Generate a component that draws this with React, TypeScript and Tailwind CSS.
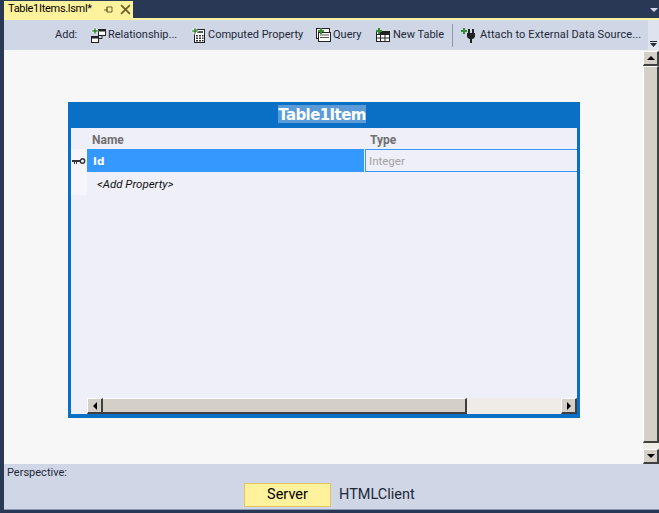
function Plus() {
  return <path d="M2 3h2V1h2v2h2v2H6v2H4V5H2z" fill="#388a34" stroke="#fff" strokeWidth="0.5" />;
}

function RelationshipIcon() {
  return (
    <svg width="16" height="16" viewBox="0 0 16 16" className="shrink-0">
      <rect x="8.5" y="2.5" width="7" height="6" fill="#fff" stroke="#222" />
      <rect x="8" y="2" width="8" height="2.5" fill="#222" />
      <rect x="1.5" y="9.5" width="7" height="6" fill="#fff" stroke="#222" />
      <rect x="1" y="9" width="8" height="2.5" fill="#222" />
      <path d="M12 8.5v3H9" fill="none" stroke="#222" />
      <Plus />
    </svg>
  );
}

function ComputedIcon() {
  return (
    <svg width="16" height="16" viewBox="0 0 16 16" className="shrink-0">
      <rect x="4.5" y="2.5" width="10" height="13" fill="#fff" stroke="#222" />
      <rect x="7" y="4" width="6" height="2" fill="#555" />
      <path d="M6 8h2v1.5H6zM9 8h2v1.5H9zM12 8h1.5v1.5H12zM6 10.5h2V12H6zM9 10.5h2V12H9zM12 10.5h1.5V12H12zM6 13h2v1.5H6zM9 13h2v1.5H9zM12 13h1.5v1.5H12z" fill="#333" />
      <Plus />
    </svg>
  );
}

function QueryIcon() {
  return (
    <svg width="16" height="16" viewBox="0 0 16 16" className="shrink-0">
      <rect x="1.5" y="1.5" width="13" height="10" fill="#fff" stroke="#222" />
      <rect x="3.5" y="5.5" width="12" height="9" fill="#fff" stroke="#222" />
      <path d="M5 8h9M5 10.5h9" stroke="#555" />
      <path d="M3 3h2V1h2v2h2v2H7v2H5V5H3z" fill="#388a34" />
    </svg>
  );
}

function TableIcon() {
  return (
    <svg width="16" height="16" viewBox="0 0 16 16" className="shrink-0">
      <rect x="1.5" y="4.5" width="13" height="10" fill="#fff" stroke="#222" />
      <rect x="6" y="4" width="9" height="3" fill="#222" />
      <path d="M1.5 7.5h13M1.5 11h13M5.5 4.5v10M10 4.5v10" stroke="#222" />
      <path d="M1 3h2V1h2v2h2v2H5v2H3V5H1z" fill="#388a34" />
    </svg>
  );
}

function PlugIcon() {
  return (
    <svg width="16" height="16" viewBox="0 0 16 16" className="shrink-0">
      <rect x="7" y="2" width="2" height="4" fill="#222" />
      <rect x="11" y="2" width="2" height="4" fill="#222" />
      <path d="M6 6h8v4l-2 2h-1v4H9v-4H8l-2-2z" fill="#222" />
      <path d="M0 3h2V1h2v2h2v2H4v2H2V5H0z" fill="#388a34" />
    </svg>
  );
}

function ToolItem({ icon, label, className }: { icon: React.ReactNode; label: string; className: string }) {
  return (
    <div className={"flex items-center gap-[2px] shrink-0 " + className}>
      {icon}
      <span className="whitespace-nowrap">{label}</span>
    </div>
  );
}

function Arrow({ dir }: { dir: "up" | "down" | "left" | "right" }) {
  const pts = { up: "0,5 8,5 4,1", down: "0,1 8,1 4,5", left: "5,0 5,8 1,4", right: "1,0 1,8 5,4" }[dir];
  const size = dir === "up" || dir === "down" ? "w-2 h-[6px]" : "w-[6px] h-2";
  const box = dir === "up" || dir === "down" ? "0 0 8 6" : "0 0 6 8";
  return (
    <svg viewBox={box} className={size}>
      <polygon points={pts} fill="#000" />
    </svg>
  );
}

function ScrollButton({ dir, className }: { dir: "up" | "down" | "left" | "right"; className: string }) {
  return (
    <div className={"shrink-0 flex items-center justify-center bg-[#d4d0c8] border-t border-l border-t-white border-l-white border-b-2 border-r-2 border-b-[#404040] border-r-[#404040] " + className}>
      <Arrow dir={dir} />
    </div>
  );
}

export default function App() {
  return (
    <div className="w-[659px] h-[513px] bg-[#293955] overflow-hidden flex flex-col text-[#1e2838] font-['Roboto',sans-serif] text-[11px]">
      {/* tab strip */}
      <div className="h-[17px] mt-px pl-1 flex shrink-0 relative">
        <div className="w-[129px] bg-[#fff29d] flex items-center pl-1 text-black">
          <span className="w-[86px] whitespace-nowrap tracking-[-0.3px]">Table1Items.lsml*</span>
          <svg width="12" height="10" viewBox="0 0 12 10" className="ml-[9px]">
            <path d="M1 5h3M4 2h5v5H4zM4 7V2" fill="none" stroke="#6b5f2a" />
          </svg>
          <svg width="11" height="11" viewBox="0 0 10 10" className="ml-[5px]">
            <path d="M1 1l8 8M9 1l-8 8" stroke="#6b5f2a" strokeWidth="1.6" />
          </svg>
        </div>
        <svg width="8" height="5" viewBox="0 0 8 5" className="absolute right-[1px] top-[7px]">
          <polygon points="0,0 8,0 4,4" fill="#cfd6e5" />
        </svg>
      </div>
      <div className="flex-1 ml-1 flex flex-col min-h-0">
        <div className="h-[2px] bg-[#fff29d] shrink-0" />
        {/* toolbar */}
        <div className="h-[30px] flex shrink-0">
          <div className="w-[644px] bg-[#cfd6e5] flex items-center pl-[51px]">
            <span className="w-[35px] shrink-0">Add:</span>
            <ToolItem icon={<RelationshipIcon />} label="Relationship..." className="w-[100px]" />
            <ToolItem icon={<ComputedIcon />} label="Computed Property" className="w-[125px]" />
            <ToolItem icon={<QueryIcon />} label="Query" className="w-[60px]" />
            <ToolItem icon={<TableIcon />} label="New Table" className="w-[77px]" />
            <div className="w-px h-[23px] bg-[#8f99ab] mr-[8px]" />
            <ToolItem icon={<PlugIcon />} label="Attach to External Data Source..." className="tracking-[0.1px] gap-[3px]" />
          </div>
          <div className="flex-1 bg-[#dde3ef] flex flex-col items-center justify-end pb-[3px]">
            <div className="w-[7px] h-px bg-[#1e2838] mb-px" />
            <svg width="7" height="4" viewBox="0 0 7 4"><polygon points="0,0 7,0 3.5,4" fill="#1e2838" /></svg>
          </div>
        </div>
        {/* designer canvas */}
        <div className="flex-1 bg-[#f7f7f7] flex min-h-0 pl-16 pt-[52px]">
          <div className="w-[512px] h-[316px] border-[3px] border-[#0a70c6] bg-[#0a70c6] flex flex-col">
            <div className="h-[23px] flex items-start justify-center shrink-0 pr-1">
              <span className="h-[18px] bg-[#5a9bd8] text-white font-bold text-[15px] leading-[20px] font-['DejaVu_Sans',sans-serif] tracking-[-0.6px]">Table1Item</span>
            </div>
            <div className="flex-1 bg-[#eeeff8] flex flex-col min-h-0">
              <div className="h-[21px] flex items-center font-bold text-[12px] text-[#707070] shrink-0 pl-[21px] pt-[2px]">
                <span className="w-[278px]">Name</span>
                <span>Type</span>
              </div>
              <div className="h-[23px] flex shrink-0">
                <div className="w-4 bg-[#f5f5fb] flex items-center justify-center">
                  <svg width="14" height="6" viewBox="0 0 14 6">
                    <path d="M0 2h8v2H5v2H4V4H3v2H2V4H0z" fill="#333" />
                    <circle cx="10.5" cy="3" r="2.2" fill="none" stroke="#333" strokeWidth="1.4" />
                  </svg>
                </div>
                <div className="w-[277px] bg-[#3399ff] text-white font-bold flex items-center pl-[6px] pt-[2px] font-['DejaVu_Sans',sans-serif] text-[10.5px]">Id</div>
                <div className="flex-1 ml-px border border-r-0 border-[#3399ff] text-[#a3a3a3] text-[11.5px] flex items-center pl-[3px] pt-[2px]">Integer</div>
              </div>
              <div className="flex-1 flex min-h-0">
                <div className="w-4 h-[23px] bg-[#f5f5fb]" />
                <div className="pl-[10px] h-[23px] flex items-center italic text-[11.5px] text-[#111] pt-[2px]">&lt;Add Property&gt;</div>
              </div>
              {/* horizontal scrollbar */}
              <div className="h-4 ml-4 flex shrink-0 bg-[#efebe6]">
                <ScrollButton dir="left" className="w-4" />
                <div className="w-[364px] bg-[#d4d0c8] border-t border-t-white border-r-2 border-b-2 border-r-[#404040] border-b-[#404040]" />
                <div className="flex-1" />
                <ScrollButton dir="right" className="w-4" />
              </div>
              <div className="h-px bg-[#0a70c6] shrink-0" />
            </div>
          </div>
          <div className="ml-[63px] -mt-[52px] w-[16px] h-[414px] flex flex-col bg-[#efebe6] shrink-0">
            <ScrollButton dir="up" className="h-[15px] mt-px" />
            <div className="h-[377px] bg-[#d4d0c8] border-b-2 border-r-2 border-b-[#404040] border-r-[#404040] border-t border-l border-white" />
            <div className="flex-1" />
            <ScrollButton dir="down" className="h-[15px]" />
          </div>
        </div>
        {/* perspective bar */}
        <div className="h-[46px] bg-[#cfd6e5] shrink-0 relative border-b border-[#8a98b8]">
          <div className="pl-[3px] pt-[2px] leading-[14px]">Perspective:</div>
          <div className="flex items-center pl-[240px] mt-[3px] text-[14.5px]">
            <div className="w-[87px] h-6 bg-[#fff29d] border border-[#e5c365] flex items-center justify-center text-black">Server</div>
            <span className="ml-2">HTMLClient</span>
          </div>
        </div>
        <div className="h-[3px] shrink-0" />
      </div>
    </div>
  );
}
